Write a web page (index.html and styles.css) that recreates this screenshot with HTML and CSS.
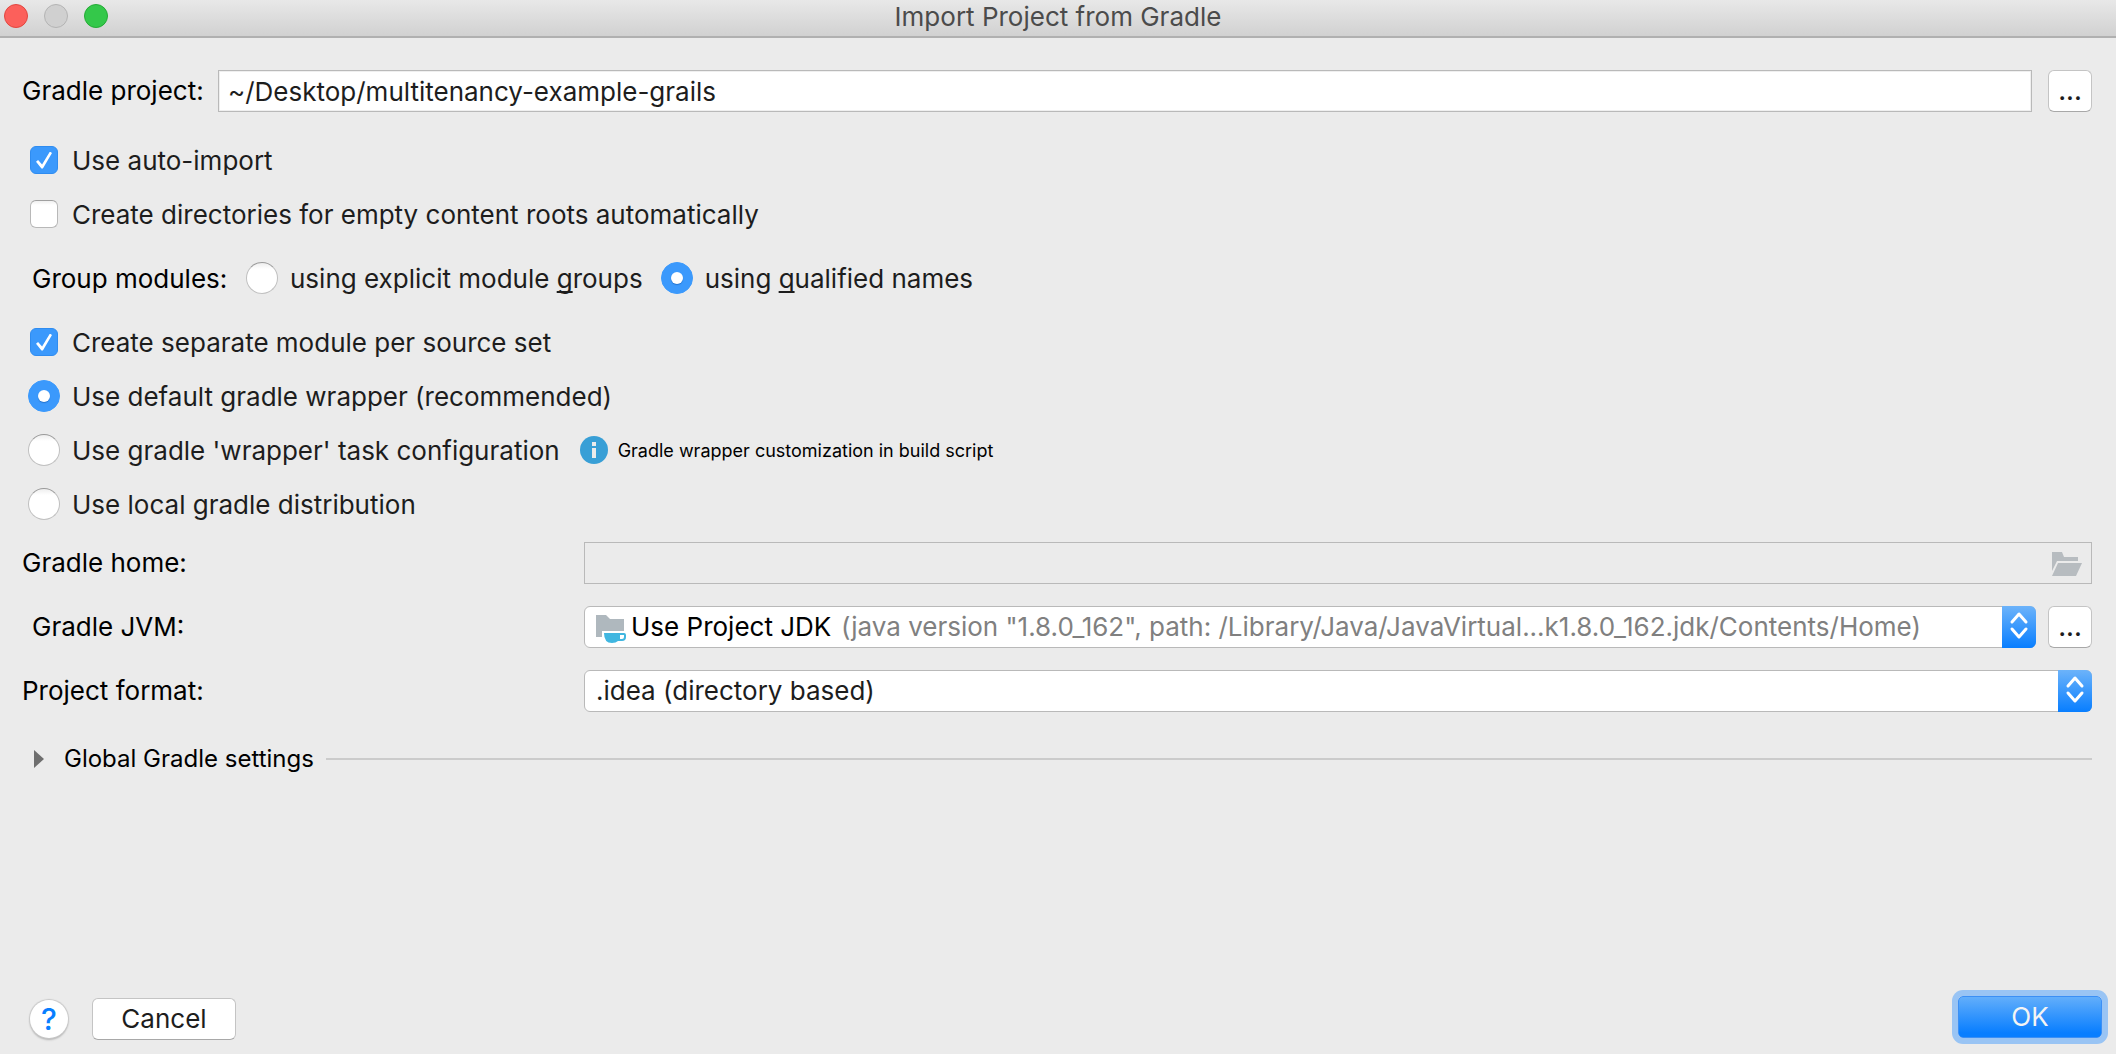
FILE: index.html
```html
<!DOCTYPE html>
<html lang="en">
<head>
<meta charset="utf-8">
<title>Import Project from Gradle</title>
<link rel="stylesheet" href="styles.css">
</head>
<body>
<div class="dialog">
  <header class="titlebar">
    <div class="lights">
      <button class="light light-close" aria-label="Close"></button>
      <button class="light light-off" aria-label="Minimize" disabled></button>
      <button class="light light-zoom" aria-label="Zoom"></button>
    </div>
    <h1 class="title">Import Project from Gradle</h1>
  </header>

  <main class="content">
    <div class="project-row">
      <label class="project-label" for="project">Gradle project:</label>
      <input class="field" id="project" type="text" value="~/Desktop/multitenancy-example-grails">
      <button class="button browse" aria-label="Browse project">...</button>
    </div>

    <div class="options">
      <label class="option"><input class="check" type="checkbox" checked><span>Use auto-import</span></label>
      <label class="option"><input class="check" type="checkbox"><span>Create directories for empty content roots automatically</span></label>
    </div>

    <div class="group-row" role="radiogroup" aria-labelledby="group-label">
      <span class="group-label" id="group-label">Group modules:</span>
      <label class="choice"><input class="radio" type="radio" name="group"><span>using explicit module <u>g</u>roups</span></label>
      <label class="choice"><input class="radio" type="radio" name="group" checked><span>using <u>q</u>ualified names</span></label>
    </div>

    <div class="options">
      <label class="option"><input class="check" type="checkbox" checked><span>Create separate module per source set</span></label>
      <label class="option"><input class="radio" type="radio" name="dist" checked><span>Use default gradle wrapper (recommended)</span></label>
      <div class="option-line">
        <label class="option"><input class="radio" type="radio" name="dist"><span>Use gradle 'wrapper' task configuration</span></label>
        <div class="hint">
          <svg class="info-icon" viewBox="0 0 28 28" aria-hidden="true"><circle cx="14" cy="14" r="14" fill="#389fd6"/><path d="M12 6h4v4h-4zM12 12h4v10h-4z" fill="#ebebeb"/></svg>
          <span>Gradle wrapper customization in build script</span>
        </div>
      </div>
      <label class="option"><input class="radio" type="radio" name="dist"><span>Use local gradle distribution</span></label>
    </div>

    <div class="form">
      <label for="home">Gradle home:</label>
      <div class="home-field">
        <input class="home-input" id="home" type="text" disabled>
        <svg class="open-icon" viewBox="0 0 30 26" aria-hidden="true"><path d="M0 2h10l2 5h14v4H5L0 21z" fill="#b7bcc0"/><path d="M6 13h24l-6 13H0z" fill="#b7bcc0"/></svg>
      </div>

      <label class="indent" for="jvm">Gradle JVM:</label>
      <div class="jvm-row">
        <div class="combo">
          <select class="select select-jvm" id="jvm"><option>Use Project JDK</option></select>
          <svg class="jdk-icon" viewBox="0 0 30 28" aria-hidden="true"><path d="M0 0h10l4 4h14v12H6v6H0z" fill="#afb8be"/><path fill-rule="evenodd" d="M8 18h20q2 0 2 2v2q0 4-4 4h-4q-2 2-6 2-8 0-8-10zM24 20v4h2q2 0 2-2v-2z" fill="#40b6e0"/></svg>
          <span class="jvm-detail">(java version "1.8.0_162", path: /Library/Java/JavaVirtual...k1.8.0_162.jdk/Contents/Home)</span>
          <span class="stepper"><svg viewBox="0 0 34 42" aria-hidden="true"><path d="M10 16l7-8 7 8M10 23l7 8 7-8"/></svg></span>
        </div>
        <button class="button browse" aria-label="Browse JVM">...</button>
      </div>

      <label for="format">Project format:</label>
      <div class="combo">
        <select class="select" id="format"><option>.idea (directory based)</option></select>
        <span class="stepper"><svg viewBox="0 0 34 42" aria-hidden="true"><path d="M10 16l7-8 7 8M10 23l7 8 7-8"/></svg></span>
      </div>
    </div>

    <div class="section">
      <button class="disclosure" aria-expanded="false">
        <svg class="triangle" viewBox="0 0 10 18" aria-hidden="true"><path d="M0 0l10 9-10 9z" fill="#6e6e6e"/></svg>
        <span>Global Gradle settings</span>
      </button>
      <div class="rule"></div>
    </div>
  </main>

  <footer class="footer">
    <button class="help" aria-label="Help">?</button>
    <button class="button cancel">Cancel</button>
    <button class="ok">OK</button>
  </footer>
</div>
</body>
</html>
```
FILE: styles.css
```css
* {
  box-sizing: border-box;
}

body {
  margin: 0;
  background: #ebebeb;
  color: #000;
  font: 26px/30px Inter, "Liberation Sans", sans-serif;
}

button,
input,
select {
  margin: 0;
  font: inherit;
  color: #1d1d1d;
}

u {
  text-decoration-skip-ink: none;
  text-decoration-thickness: 2px;
  text-underline-offset: 3px;
}

.dialog {
  display: flex;
  flex-direction: column;
  min-height: 100vh;
}

.titlebar {
  display: grid;
  grid-template-columns: 1fr auto 1fr;
  align-items: start;
  height: 38px;
  padding: 2px 4px;
  background: linear-gradient(#e8e8e8, #d1d1d1);
  border-bottom: 2px solid #b0b0b0;
}

.lights {
  display: flex;
  gap: 16px;
  padding-top: 2px;
}

.light {
  width: 24px;
  height: 24px;
  padding: 0;
  border: 1px solid;
  border-radius: 50%;
}

.light-close {
  background: #fc605b;
  border-color: #e2463f;
}

.light-off {
  background: #d0d0d0;
  border-color: #b4b4b4;
}

.light-zoom {
  background: #34c84a;
  border-color: #24ab35;
}

.title {
  margin: 0;
  font-size: 26px;
  font-weight: 400;
  color: #4b4b4b;
}

.content {
  flex: 1;
  padding: 32px 24px 0 22px;
}

.project-row {
  display: flex;
  align-items: center;
  gap: 16px;
  margin-bottom: 21px;
}

.project-label {
  width: 180px;
  white-space: nowrap;
}

.field {
  flex: 1;
  height: 42px;
  padding: 0 9px;
  background: #fff;
  border: 1px solid #b9b9b9;
  box-shadow: inset 0 0 0 1px #efefef;
}

.button {
  height: 42px;
  padding: 0;
  background: #fff;
  border: 1px solid #c4c4c4;
  border-bottom-color: #a8a8a8;
  border-radius: 6px;
}

.browse {
  width: 44px;
  font-weight: 500;
}

.options {
  display: flex;
  flex-direction: column;
  align-items: flex-start;
}

.option,
.option-line {
  display: flex;
  align-items: center;
  height: 54px;
  color: #1d1d1d;
}

.option {
  gap: 12px;
  padding-left: 6px;
}

.option span,
.choice span,
.hint span {
  padding-top: 2px;
}

.option-line {
  gap: 20px;
}

.check {
  appearance: none;
  width: 28px;
  height: 28px;
  margin: 0 2px;
  background: #fff linear-gradient(#f0f0f0, #fff 4px);
  border: 1px solid #b8b8b8;
  border-top-color: #a0a0a0;
  border-radius: 6px;
}

.check:checked {
  display: grid;
  place-items: center;
  background: #3b99fc;
  border-color: #2f8cf0;
}

.check:checked::before {
  content: "";
  width: 16px;
  height: 17px;
  background: #fff;
  clip-path: polygon(0 60%, 13% 50%, 38% 76%, 87% 0, 100% 9%, 43% 100%, 34% 100%);
}

.radio {
  appearance: none;
  display: grid;
  place-items: center;
  width: 32px;
  height: 32px;
  background: #fff linear-gradient(#eee, #fff 6px);
  border: 1px solid #c0c0c0;
  border-top-color: #999;
  border-radius: 50%;
}

.radio:checked {
  background: #3b99fc;
  border-color: #3b99fc;
}

.radio:checked::before {
  content: "";
  width: 12px;
  height: 12px;
  background: #fff;
  border-radius: 50%;
  box-shadow: 0 1px 1px #2474d0;
}

.group-row {
  display: flex;
  align-items: center;
  gap: 18px;
  height: 42px;
  margin: 16px 0;
  padding-left: 10px;
}

.group-label {
  min-width: 196px;
  padding-top: 2px;
}

.choice {
  display: flex;
  align-items: center;
  gap: 12px;
  color: #1d1d1d;
}

.hint {
  display: flex;
  align-items: center;
  gap: 10px;
  font-size: 18px;
  color: #000;
}

.info-icon {
  width: 28px;
  height: 28px;
}

.form {
  display: grid;
  grid-template-columns: 562px 1fr;
  row-gap: 22px;
  align-items: center;
  margin-top: 11px;
}

.indent {
  padding-left: 10px;
}

.home-field {
  display: flex;
  align-items: center;
  height: 42px;
  padding-right: 9px;
  border: 1px solid #b9b9b9;
}

.home-input {
  flex: 1;
  height: 40px;
  border: 0;
  background: transparent;
}

.open-icon {
  width: 30px;
  height: 26px;
}

.jvm-row {
  display: grid;
  grid-template-columns: 1fr 44px;
  column-gap: 12px;
}

.combo {
  display: grid;
  grid-template-columns: 12px 30px 1fr 34px;
  align-items: center;
}

.combo > * {
  grid-row: 1;
}

.select {
  grid-column: 1 / -1;
  appearance: none;
  width: 100%;
  height: 42px;
  padding: 0 11px;
  background: #fff;
  border: 1px solid #b9b9b9;
  border-radius: 6px;
}

.select-jvm {
  padding-left: 46px;
  color: #000;
}

.jdk-icon {
  grid-column: 2;
  width: 30px;
  height: 28px;
  margin-top: 4px;
  pointer-events: none;
}

.jvm-detail {
  grid-column: 3;
  padding-left: 215px;
  color: #808080;
  white-space: nowrap;
  pointer-events: none;
}

.stepper {
  grid-column: 4;
  height: 42px;
  background: linear-gradient(#6cb3fa, #087eff);
  border-radius: 0 6px 6px 0;
  pointer-events: none;
}

.stepper svg {
  display: block;
  fill: none;
  stroke: #fff;
  stroke-width: 3;
  stroke-linecap: round;
  stroke-linejoin: round;
}

.section {
  display: flex;
  align-items: center;
  gap: 12px;
  margin-top: 32px;
}

.disclosure {
  display: flex;
  align-items: center;
  gap: 20px;
  padding: 0 0 0 12px;
  border: 0;
  background: none;
  font-size: 24px;
  color: #000;
}

.triangle {
  width: 10px;
  height: 18px;
}

.rule {
  flex: 1;
  height: 2px;
  background: #cbcbcb;
}

.footer {
  display: flex;
  align-items: flex-end;
  height: 58px;
  padding: 0 14px 14px 30px;
}

.help {
  width: 38px;
  height: 38px;
  margin: 0 24px 2px 0;
  padding: 0;
  background: #fff;
  border: 0;
  border-radius: 50%;
  box-shadow: 0 0 1px 1px #c8c8c8, 0 2px 2px #b0b0b0;
  color: #087eff;
  font-size: 30px;
  font-weight: 500;
}

.cancel {
  width: 144px;
}

.ok {
  align-self: flex-start;
  width: 144px;
  height: 42px;
  margin-left: auto;
  padding: 0;
  background: linear-gradient(#62aefb, #087eff 90%);
  border: 1px solid #3b8ff5;
  border-radius: 5px;
  box-shadow: 0 0 0 6px #99c4f4;
  color: #f4f4f4;
}
```
